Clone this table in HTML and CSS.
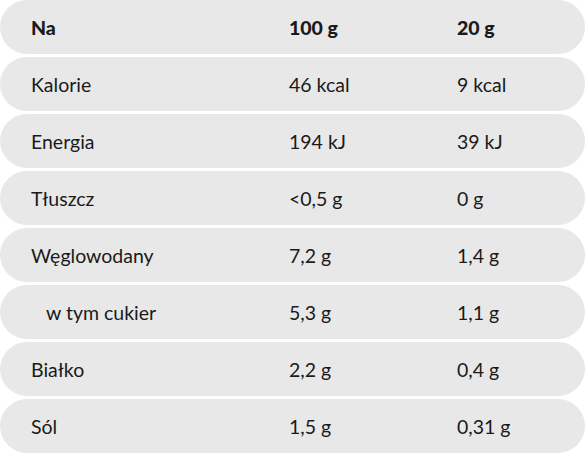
FILE: index.html
```html
<!DOCTYPE html>
<html lang="pl">
<head>
<meta charset="utf-8">
<link rel="stylesheet" href="styles.css">
</head>
<body>
<div class="table">
  <div class="row head"><span class="c1">Na</span><span class="c2">100 g</span><span class="c3">20 g</span></div>
  <div class="row"><span class="c1">Kalorie</span><span class="c2">46 kcal</span><span class="c3">9 kcal</span></div>
  <div class="row"><span class="c1">Energia</span><span class="c2">194 kJ</span><span class="c3">39 kJ</span></div>
  <div class="row"><span class="c1">Tłuszcz</span><span class="c2">&lt;0,5 g</span><span class="c3">0 g</span></div>
  <div class="row"><span class="c1">Węglowodany</span><span class="c2">7,2 g</span><span class="c3">1,4 g</span></div>
  <div class="row"><span class="c1 sub">w tym cukier</span><span class="c2">5,3 g</span><span class="c3">1,1 g</span></div>
  <div class="row"><span class="c1">Białko</span><span class="c2">2,2 g</span><span class="c3">0,4 g</span></div>
  <div class="row"><span class="c1">Sól</span><span class="c2">1,5 g</span><span class="c3">0,31 g</span></div>
</div>
</body>
</html>
```
FILE: styles.css
```css
html, body {
  margin: 0;
  padding: 0;
  background: #fff;
}
body {
  font-family: Lato, "Open Sans", sans-serif;
  font-size: 19.5px;
  color: #1a1a1a;
}
.table {
  display: flex;
  flex-direction: column;
  gap: 3px;
  padding-top: 0;
}
.row {
  display: flex;
  align-items: center;
  height: 54px;
  background: #e8e8e8;
  border-radius: 27px;
  padding-left: 31px;
}
.c1 { width: 258px; }
.c2 { width: 168px; }
.c3 { flex: 1; }
.sub { padding-left: 15px; box-sizing: border-box; }
.head { font-weight: 900; }
```
